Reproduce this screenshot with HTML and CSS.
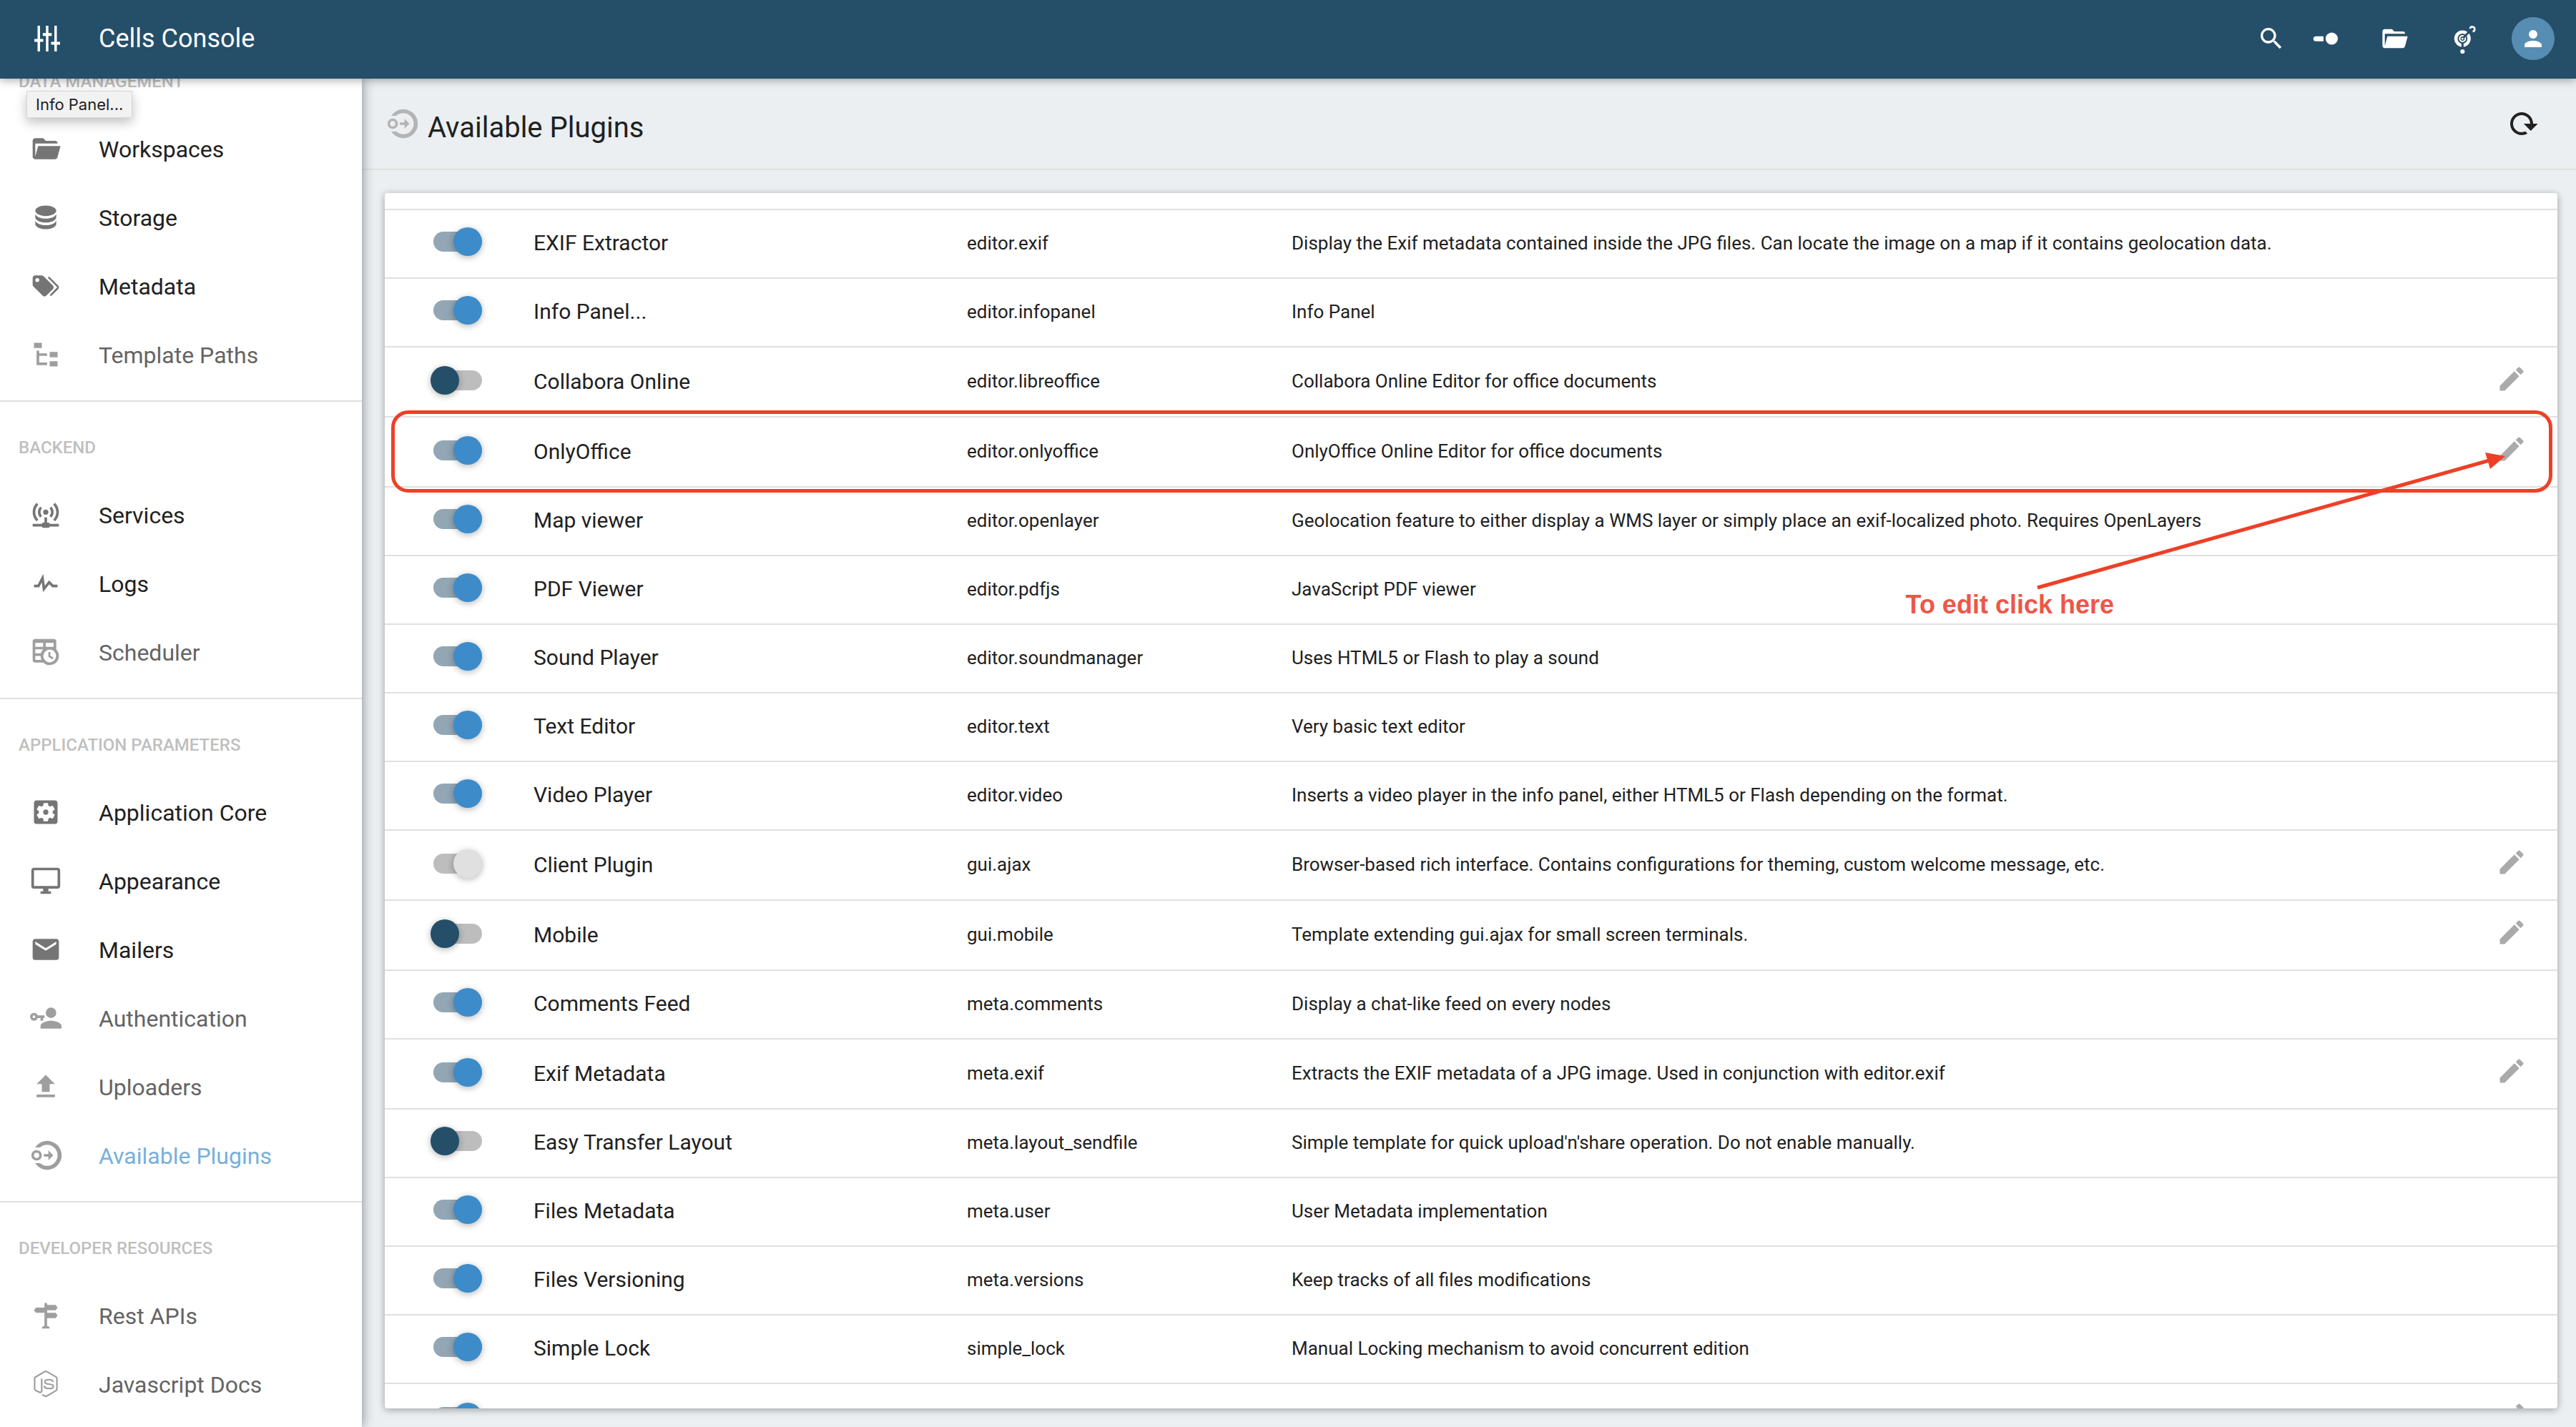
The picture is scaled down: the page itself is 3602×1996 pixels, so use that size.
FILE: index.html
```html
<!DOCTYPE html>
<html lang="en">
<head>
<meta charset="utf-8">
<title>Cells Console</title>
<link rel="stylesheet" href="styles.css">
</head>
<body>
<svg class="sprite" aria-hidden="true">
  <symbol id="i-sliders" viewBox="0 0 40 40"><path d="M8.5 2h3.5v36h-3.500zM20.200 2h3.500v36h-3.500zM32 2h3.500v36H32zM4 20.500h12.500v4H4zM15.800 12.300h12.500v4h-12.500zM27.500 24.500H40v4H27.500z"/></symbol>
  <symbol id="i-folder" viewBox="0 0 24 24"><path d="M19,20H4C2.89,20 2,19.1 2,18V6C2,4.89 2.89,4 4,4H10L12,6H19A2,2 0 0,1 21,8H21L4,8V18L6.14,10H23.21L20.93,18.5C20.7,19.37 19.92,20 19,20Z"/></symbol>
  <symbol id="i-database" viewBox="0 0 24 24"><path d="M12,3C7.58,3 4,4.79 4,7C4,9.21 7.58,11 12,11C16.42,11 20,9.21 20,7C20,4.79 16.42,3 12,3M4,9V12C4,14.21 7.58,16 12,16C16.42,16 20,14.21 20,12V9C20,11.21 16.42,13 12,13C7.58,13 4,11.21 4,9M4,14V17C4,19.21 7.58,21 12,21C16.42,21 20,19.21 20,17V14C20,16.21 16.42,18 12,18C7.58,18 4,16.21 4,14Z"/></symbol>
  <symbol id="i-tags" viewBox="0 0 24 24"><path d="M5.5,9A1.5,1.5 0 0,0 7,7.5A1.5,1.5 0 0,0 5.5,6A1.5,1.5 0 0,0 4,7.5A1.5,1.5 0 0,0 5.5,9M17.41,11.58C17.77,11.94 18,12.44 18,13C18,13.55 17.78,14.05 17.41,14.41L12.41,19.41C12.05,19.77 11.55,20 11,20C10.45,20 9.95,19.78 9.58,19.41L2.59,12.42C2.22,12.05 2,11.55 2,11V6C2,4.89 2.89,4 4,4H9C9.55,4 10.05,4.22 10.41,4.58L17.41,11.58M13.54,5.71L14.54,4.71L21.41,11.58C21.78,11.94 22,12.45 22,13C22,13.55 21.78,14.05 21.42,14.41L16.04,19.79L15.04,18.79L20.75,13L13.54,5.71Z"/></symbol>
  <symbol id="i-tree" viewBox="0 0 24 24"><path d="M3,3H9V7H3V3M15,10H21V14H15V10M15,17H21V21H15V17M13,13H7V18H13V20H7L5,20V9H7V11H13V13Z"/></symbol>
  <symbol id="i-network" viewBox="0 0 24 24"><path d="M4.93,2.93C3.12,4.74 2,7.24 2,10C2,12.76 3.12,15.26 4.93,17.07L6.34,15.66C4.89,14.22 4,12.22 4,10C4,7.79 4.89,5.78 6.34,4.34L4.93,2.93M19.07,2.93L17.66,4.34C19.11,5.78 20,7.79 20,10C20,12.22 19.11,14.22 17.66,15.66L19.07,17.07C20.88,15.26 22,12.76 22,10C22,7.24 20.88,4.74 19.07,2.93M7.76,5.76C6.67,6.85 6,8.35 6,10C6,11.65 6.67,13.15 7.76,14.24L9.17,12.83C8.45,12.11 8,11.11 8,10C8,8.89 8.45,7.89 9.17,7.17L7.76,5.76M16.24,5.76L14.83,7.17C15.55,7.89 16,8.89 16,10C16,11.11 15.55,12.11 14.83,12.83L16.24,14.24C17.33,13.15 18,11.65 18,10C18,8.35 17.33,6.85 16.24,5.76M12,8A2,2 0 0,0 10,10A2,2 0 0,0 12,12A2,2 0 0,0 14,10A2,2 0 0,0 12,8M11,14V18H10A1,1 0 0,0 9,19H2V21H9A1,1 0 0,0 10,22H14A1,1 0 0,0 15,21H22V19H15A1,1 0 0,0 14,18H13V14H11Z"/></symbol>
  <symbol id="i-pulse" viewBox="0 0 24 24"><path d="M3,13H5.79L10.1,4.79L11.28,13.75L14.5,9.66L17.83,13H21V15H17L14.67,12.67L9.92,18.73L8.94,11.31L7,15H3V13Z"/></symbol>
  <symbol id="i-timetable" viewBox="0 0 24 24"><path d="M14,12H15.5V14.82L17.94,16.23L17.19,17.53L14,15.69V12M4,2H18A2,2 0 0,1 20,4V10.1C21.24,11.36 22,13.09 22,15A7,7 0 0,1 15,22C13.09,22 11.36,21.24 10.1,20H4A2,2 0 0,1 2,18V4A2,2 0 0,1 4,2M4,15V18H8.67C8.24,17.09 8,16.07 8,15H4M4,8H10V5H4V8M18,8V5H12V8H18M4,13H8.29C8.63,11.85 9.26,10.82 10.1,10H4V13M15,10.15A4.85,4.85 0 0,0 10.15,15C10.15,17.68 12.32,19.85 15,19.85A4.85,4.85 0 0,0 19.85,15C19.85,12.32 17.68,10.15 15,10.15Z"/></symbol>
  <symbol id="i-settings" viewBox="0 0 24 24"><path d="M17.25,12C17.25,12.23 17.23,12.46 17.2,12.68L18.68,13.84C18.81,13.95 18.85,14.13 18.76,14.29L17.36,16.71C17.27,16.86 17.09,16.92 16.93,16.86L15.19,16.16C14.83,16.44 14.43,16.67 14,16.85L13.75,18.7C13.72,18.87 13.57,19 13.4,19H10.6C10.43,19 10.28,18.87 10.25,18.7L10,16.85C9.56,16.67 9.17,16.44 8.81,16.16L7.07,16.86C6.91,16.92 6.73,16.86 6.64,16.71L5.24,14.29C5.15,14.13 5.19,13.95 5.32,13.84L6.8,12.68C6.77,12.46 6.75,12.23 6.75,12C6.75,11.77 6.77,11.54 6.8,11.32L5.32,10.16C5.19,10.05 5.15,9.86 5.24,9.71L6.64,7.29C6.73,7.13 6.91,7.07 7.07,7.13L8.81,7.84C9.17,7.56 9.56,7.32 10,7.15L10.25,5.29C10.28,5.13 10.43,5 10.6,5H13.4C13.57,5 13.72,5.13 13.75,5.29L14,7.15C14.43,7.32 14.83,7.56 15.19,7.84L16.93,7.13C17.09,7.07 17.27,7.13 17.36,7.29L18.76,9.71C18.85,9.86 18.81,10.05 18.68,10.16L17.2,11.32C17.23,11.54 17.25,11.77 17.25,12M19,3H5C3.89,3 3,3.89 3,5V19A2,2 0 0,0 5,21H19A2,2 0 0,0 21,19V5C21,3.89 20.1,3 19,3M12,10C10.89,10 10,10.89 10,12A2,2 0 0,0 12,14A2,2 0 0,0 14,12A2,2 0 0,0 12,10Z" fill-rule="evenodd"/></symbol>
  <symbol id="i-monitor" viewBox="0 0 24 24"><path d="M21,16H3V4H21M21,2H3C1.89,2 1,2.89 1,4V16A2,2 0 0,0 3,18H10V20H8V22H16V20H14V18H21A2,2 0 0,0 23,16V4C23,2.89 22.1,2 21,2Z"/></symbol>
  <symbol id="i-email" viewBox="0 0 24 24"><path d="M20,8L12,13L4,8V6L12,11L20,6M20,4H4C2.89,4 2,4.89 2,6V18A2,2 0 0,0 4,20H20A2,2 0 0,0 22,18V6C22,4.89 21.1,4 20,4Z"/></symbol>
  <symbol id="i-key" viewBox="0 0 24 24"><path d="M11,10V12H10V14H8V12H5.83C5.42,13.17 4.31,14 3,14A3,3 0 0,1 0,11A3,3 0 0,1 3,8C4.31,8 5.42,8.83 5.83,10H11M3,10A1,1 0 0,0 2,11A1,1 0 0,0 3,12A1,1 0 0,0 4,11A1,1 0 0,0 3,10M16,14C18.67,14 24,15.34 24,18V20H8V18C8,15.34 13.33,14 16,14M16,12A4,4 0 0,1 12,8A4,4 0 0,1 16,4A4,4 0 0,1 20,8A4,4 0 0,1 16,12Z"/></symbol>
  <symbol id="i-upload" viewBox="0 0 24 24"><path d="M9,16V10H5L12,3L19,10H15V16H9M5,20V18H19V20H5Z"/></symbol>
  <symbol id="i-plugins" viewBox="0 0 24 24"><path d="M3.900,6A11,11 0 1 1 3.900,18H7.700A8,8 0 1 0 7.700,6ZM10.500,11H14V8.200L17.700,12L14,15.800V13H10.500ZM5,8A4,4 0 1 0 5,16A4,4 0 1 0 5,8M5,10A2,2 0 1 1 5,14A2,2 0 1 1 5,10Z" fill-rule="evenodd"/></symbol>
  <symbol id="i-signs" viewBox="0 0 24 24"><path d="M11,3L12,2L13,3V4H19.500L21,6L19.500,8H13V10H19.500L21,12L19.500,14H13V20A2,2 0 0,1 15,22H9A2,2 0 0,1 11,20V10H4.500L3,8L4.500,6H11Z"/></symbol>
  <symbol id="i-node" viewBox="0 0 24 24"><path fill="none" stroke="currentColor" stroke-width="1.200" d="M8.900,7.800V17.200Q8.900,18.600 7.300,18.200Q6,17.800 4.200,16.800Q3.500,16.400 3.500,15.600V7.800Q3.500,7.100 4.100,6.700L11.300,2.400Q12,2 12.700,2.400L19.800,6.500Q20.500,6.900 20.500,7.600V15.900Q20.500,16.600 19.800,17L12.700,21.100Q12,21.500 11.300,21.100L9.300,20M17.500,10.400C17.400,9.200 16.500,8.600 14.500,8.600C12.400,8.600 11.300,9.200 11.300,10.300C11.300,11.600 12.500,11.800 14.500,12C16.800,12.200 17.800,12.600 17.800,13.600C17.800,14.900 16.600,15.400 14.500,15.400C12.200,15.400 11,14.900 10.900,13.300"/></symbol>
  <symbol id="i-pencil" viewBox="0 0 24 24"><path d="M20.71,7.04C21.1,6.65 21.1,6 20.71,5.63L18.37,3.29C18,2.9 17.35,2.9 16.96,3.29L15.12,5.12L18.87,8.87M3,17.25V21H6.75L17.81,9.93L14.06,6.18L3,17.25Z"/></symbol>
  <symbol id="i-account" viewBox="0 0 24 24"><path d="M12,4A4,4 0 0,1 16,8A4,4 0 0,1 12,12A4,4 0 0,1 8,8A4,4 0 0,1 12,4M12,14C16.42,14 20,15.79 20,18V20H4V18C4,15.79 7.58,14 12,14Z"/></symbol>
  <symbol id="i-search" viewBox="0 0 24 24"><path d="M9.5,3A6.5,6.5 0 0,1 16,9.5C16,11.11 15.41,12.59 14.44,13.73L14.71,14H15.5L20.5,19L19,20.5L14,15.5V14.71L13.73,14.44C12.59,15.41 11.11,16 9.5,16A6.5,6.5 0 0,1 3,9.5A6.5,6.5 0 0,1 9.5,3M9.5,5C7,5 5,7 5,9.5C5,12 7,14 9.5,14C12,14 14,12 14,9.5C14,7 12,5 9.5,5Z"/></symbol>
  <symbol id="i-switch" viewBox="0 0 40 40"><path d="M6.300 16.700H17v7H6.300a3.500 3.500 0 0 1 0-7z"/><circle cx="28.400" cy="20" r="8.600"/></symbol>
  <symbol id="i-tracker" viewBox="0 0 40 40"><circle cx="19.300" cy="20" r="9.200" fill="none" stroke="currentColor" stroke-width="4.600"/><circle cx="19.300" cy="20" r="5"/><circle cx="19.300" cy="20" r="2.200" fill="none" stroke="#254e69" stroke-width="1.400"/><path d="M20.500 18.800L31 8M19.300 25v9" stroke="#254e69" stroke-width="3" fill="none"/><path d="M29.800 6A3.300 3.300 0 1 1 33.500 10" fill="none" stroke="currentColor" stroke-width="2.600"/><circle cx="19.300" cy="38" r="3.100"/></symbol>
  <symbol id="i-reload" viewBox="0 0 24 24"><path d="M19,12H22.32L17.37,16.95L12.42,12H16.97C17,10.46 16.42,8.93 15.24,7.75C12.9,5.41 9.1,5.41 6.76,7.75C4.42,10.09 4.42,13.9 6.76,16.24C8.6,18.08 11.36,18.47 13.58,17.41L15.05,18.88C12,20.69 8,20.29 5.34,17.65C2.22,14.53 2.23,9.47 5.35,6.35C8.5,3.22 13.53,3.21 16.66,6.34C18.22,7.9 19,9.95 19,12Z"/></symbol>
</svg>

<header class="topbar">
  <svg class="icon icon-m"><use href="#i-sliders"/></svg>
  <span class="brand">Cells Console</span>
  <div class="actions">
    <button class="action action-search" aria-label="Search"><svg class="icon icon-m"><use href="#i-search"/></svg></button>
    <button class="action" aria-label="Toggle simple mode"><svg class="icon icon-m"><use href="#i-switch"/></svg></button>
    <button class="action" aria-label="Workspaces"><svg class="icon icon-m"><use href="#i-folder"/></svg></button>
    <button class="action" aria-label="Help"><svg class="icon icon-m icon-tall"><use href="#i-tracker"/></svg></button>
    <button class="avatar" aria-label="Account"><svg class="icon icon-s"><use href="#i-account"/></svg></button>
  </div>
</header>

<div class="body">
  <aside class="sidebar">
    <nav class="nav">
      <section class="group">
        <h2 class="group-title">DATA MANAGEMENT</h2>
        <a class="item" href="#"><svg class="icon"><use href="#i-folder"/></svg><span class="label">Workspaces</span></a>
        <a class="item" href="#"><svg class="icon"><use href="#i-database"/></svg><span class="label">Storage</span></a>
        <a class="item" href="#"><svg class="icon"><use href="#i-tags"/></svg><span class="label">Metadata</span></a>
        <a class="item dim" href="#"><svg class="icon"><use href="#i-tree"/></svg><span class="label">Template Paths</span></a>
      </section>
      <section class="group">
        <h2 class="group-title">BACKEND</h2>
        <a class="item" href="#"><svg class="icon"><use href="#i-network"/></svg><span class="label">Services</span></a>
        <a class="item" href="#"><svg class="icon"><use href="#i-pulse"/></svg><span class="label">Logs</span></a>
        <a class="item dim" href="#"><svg class="icon"><use href="#i-timetable"/></svg><span class="label">Scheduler</span></a>
      </section>
      <section class="group">
        <h2 class="group-title">APPLICATION PARAMETERS</h2>
        <a class="item" href="#"><svg class="icon"><use href="#i-settings"/></svg><span class="label">Application Core</span></a>
        <a class="item" href="#"><svg class="icon"><use href="#i-monitor"/></svg><span class="label">Appearance</span></a>
        <a class="item" href="#"><svg class="icon"><use href="#i-email"/></svg><span class="label">Mailers</span></a>
        <a class="item dim" href="#"><svg class="icon"><use href="#i-key"/></svg><span class="label">Authentication</span></a>
        <a class="item dim" href="#"><svg class="icon"><use href="#i-upload"/></svg><span class="label">Uploaders</span></a>
        <a class="item dim active" href="#"><svg class="icon"><use href="#i-plugins"/></svg><span class="label">Available Plugins</span></a>
      </section>
      <section class="group">
        <h2 class="group-title">DEVELOPER RESOURCES</h2>
        <a class="item dim" href="#"><svg class="icon"><use href="#i-signs"/></svg><span class="label">Rest APIs</span></a>
        <a class="item dim" href="#"><svg class="icon"><use href="#i-node"/></svg><span class="label">Javascript Docs</span></a>
      </section>
    </nav>
    <div class="tooltip" role="tooltip">Info Panel...</div>
  </aside>

  <main class="main">
    <div class="page-head">
      <svg class="icon page-icon"><use href="#i-plugins"/></svg>
      <h1 class="page-title">Available Plugins</h1>
      <button class="reload" aria-label="Reload"><svg class="icon icon-l"><use href="#i-reload"/></svg></button>
    </div>
    <div class="panel">
      <div class="card">
        <table class="plugins">
          <colgroup><col class="c-toggle"><col class="c-name"><col class="c-id"><col class="c-desc"><col class="c-edit"></colgroup>
          <tbody>
            <tr><td><input class="switch" type="checkbox" role="switch" aria-label="EXIF Extractor" checked></td><td class="name">EXIF Extractor</td><td>editor.exif</td><td>Display the Exif metadata contained inside the JPG files. Can locate the image on a map if it contains geolocation data.</td><td></td></tr>
            <tr><td><input class="switch" type="checkbox" role="switch" aria-label="Info Panel..." checked></td><td class="name">Info Panel...</td><td>editor.infopanel</td><td>Info Panel</td><td></td></tr>
            <tr class="editable"><td><input class="switch" type="checkbox" role="switch" aria-label="Collabora Online"></td><td class="name">Collabora Online</td><td>editor.libreoffice</td><td>Collabora Online Editor for office documents</td><td><button class="edit" aria-label="Edit Collabora Online"><svg class="icon"><use href="#i-pencil"/></svg></button></td></tr>
            <tr class="editable"><td><input class="switch" type="checkbox" role="switch" aria-label="OnlyOffice" checked></td><td class="name">OnlyOffice</td><td>editor.onlyoffice</td><td>OnlyOffice Online Editor for office documents</td><td><button class="edit" aria-label="Edit OnlyOffice"><svg class="icon"><use href="#i-pencil"/></svg></button></td></tr>
            <tr><td><input class="switch" type="checkbox" role="switch" aria-label="Map viewer" checked></td><td class="name">Map viewer</td><td>editor.openlayer</td><td>Geolocation feature to either display a WMS layer or simply place an exif-localized photo. Requires OpenLayers</td><td></td></tr>
            <tr><td><input class="switch" type="checkbox" role="switch" aria-label="PDF Viewer" checked></td><td class="name">PDF Viewer</td><td>editor.pdfjs</td><td>JavaScript PDF viewer</td><td></td></tr>
            <tr><td><input class="switch" type="checkbox" role="switch" aria-label="Sound Player" checked></td><td class="name">Sound Player</td><td>editor.soundmanager</td><td>Uses HTML5 or Flash to play a sound</td><td></td></tr>
            <tr><td><input class="switch" type="checkbox" role="switch" aria-label="Text Editor" checked></td><td class="name">Text Editor</td><td>editor.text</td><td>Very basic text editor</td><td></td></tr>
            <tr><td><input class="switch" type="checkbox" role="switch" aria-label="Video Player" checked></td><td class="name">Video Player</td><td>editor.video</td><td>Inserts a video player in the info panel, either HTML5 or Flash depending on the format.</td><td></td></tr>
            <tr class="editable"><td><input class="switch" type="checkbox" role="switch" aria-label="Client Plugin" checked disabled></td><td class="name">Client Plugin</td><td>gui.ajax</td><td>Browser-based rich interface. Contains configurations for theming, custom welcome message, etc.</td><td><button class="edit" aria-label="Edit Client Plugin"><svg class="icon"><use href="#i-pencil"/></svg></button></td></tr>
            <tr class="editable"><td><input class="switch" type="checkbox" role="switch" aria-label="Mobile"></td><td class="name">Mobile</td><td>gui.mobile</td><td>Template extending gui.ajax for small screen terminals.</td><td><button class="edit" aria-label="Edit Mobile"><svg class="icon"><use href="#i-pencil"/></svg></button></td></tr>
            <tr><td><input class="switch" type="checkbox" role="switch" aria-label="Comments Feed" checked></td><td class="name">Comments Feed</td><td>meta.comments</td><td>Display a chat-like feed on every nodes</td><td></td></tr>
            <tr class="editable"><td><input class="switch" type="checkbox" role="switch" aria-label="Exif Metadata" checked></td><td class="name">Exif Metadata</td><td>meta.exif</td><td>Extracts the EXIF metadata of a JPG image. Used in conjunction with editor.exif</td><td><button class="edit" aria-label="Edit Exif Metadata"><svg class="icon"><use href="#i-pencil"/></svg></button></td></tr>
            <tr><td><input class="switch" type="checkbox" role="switch" aria-label="Easy Transfer Layout"></td><td class="name">Easy Transfer Layout</td><td>meta.layout_sendfile</td><td>Simple template for quick upload'n'share operation. Do not enable manually.</td><td></td></tr>
            <tr><td><input class="switch" type="checkbox" role="switch" aria-label="Files Metadata" checked></td><td class="name">Files Metadata</td><td>meta.user</td><td>User Metadata implementation</td><td></td></tr>
            <tr><td><input class="switch" type="checkbox" role="switch" aria-label="Files Versioning" checked></td><td class="name">Files Versioning</td><td>meta.versions</td><td>Keep tracks of all files modifications</td><td></td></tr>
            <tr><td><input class="switch" type="checkbox" role="switch" aria-label="Simple Lock" checked></td><td class="name">Simple Lock</td><td>simple_lock</td><td>Manual Locking mechanism to avoid concurrent edition</td><td></td></tr>
            <tr class="editable"><td><input class="switch" type="checkbox" role="switch" aria-label="Plugin" checked></td><td class="name"></td><td></td><td></td><td><button class="edit" aria-label="Edit plugin"><svg class="icon"><use href="#i-pencil"/></svg></button></td></tr>
          </tbody>
        </table>
      </div>
      <div class="highlight"></div>
      <svg class="arrow" viewBox="0 0 670 200" aria-hidden="true"><path d="M9 192L648 12" stroke="#ed4026" stroke-width="5" fill="none"/><path d="M635 3L663 8L642 26z" fill="#ed4026"/></svg>
      <p class="note">To edit click here</p>
    </div>
  </main>
</div>
</body>
</html>
```
FILE: styles.css
```css
* { box-sizing: border-box; }

body {
  margin: 0;
  height: 100vh;
  display: flex;
  flex-direction: column;
  overflow: hidden;
  background: #ebeff1;
  color: #212121;
  font-family: Roboto, "Noto Sans", sans-serif;
  font-size: 26px;
}

button {
  padding: 0;
  border: 0;
  background: none;
  color: inherit;
  cursor: pointer;
}

.sprite { display: none; }

.icon {
  display: block;
  flex: none;
  width: 44px;
  height: 44px;
  fill: currentColor;
}
.icon-s { width: 36px; height: 36px; }
.icon-m { width: 40px; height: 40px; }
.icon-l { width: 48px; height: 48px; }
.icon-tall { overflow: visible; }
#i-tracker { overflow: visible; }

/* Top bar */
.topbar {
  flex: none;
  position: relative;
  z-index: 2;
  display: flex;
  align-items: center;
  height: 110px;
  padding: 0 30px 2px 44px;
  background: #254e69;
  color: #fff;
  box-shadow: 0 2px 12px rgba(0, 0, 0, .35);
}
.brand { margin-left: 54px; font-size: 36px; }
.actions {
  display: flex;
  align-items: center;
  margin-left: auto;
}
.action { width: 40px; margin-right: 56px; }
.action-search { margin-right: 36px; }
.action:nth-last-child(2) { margin-right: 48px; }
.avatar {
  display: grid;
  place-items: center;
  width: 60px;
  height: 60px;
  border-radius: 50%;
  background: #588db3;
}

/* Layout */
.body { flex: 1; display: flex; min-height: 0; }

/* Sidebar */
.sidebar {
  flex: none;
  position: relative;
  z-index: 1;
  width: 506px;
  background: #fff;
  box-shadow: 0 0 16px rgba(0, 0, 0, .45);
}
.nav { height: 100%; overflow: hidden; }
.nav::before { content: ""; display: block; margin-top: -60px; }
.group { padding-bottom: 16px; border-bottom: 2px solid #e0e0e0; }
.group:last-child { border-bottom: 0; }
.group-title {
  margin: 0;
  padding: 16px 26px 0;
  height: 110px;
  line-height: 96px;
  font-size: 24px;
  font-weight: 500;
  color: #bfbfbf;
}
.item {
  display: flex;
  align-items: center;
  height: 96px;
  padding-left: 42px;
  color: #757575;
  text-decoration: none;
}
.label { margin-left: 52px; padding-top: 2px; font-size: 32px; color: #212121; }
.dim { color: #9e9e9e; }
.dim .label { color: #646464; }
.active .label { color: #77b0dc; }

.tooltip {
  position: absolute;
  left: 37px;
  top: 17px;
  padding: 0 12px;
  background: #f2f2f2;
  border: 1px solid #d6d6d6;
  box-shadow: 0 6px 16px rgba(0, 0, 0, .25);
  font: 22px/36px Inter, "Noto Sans", sans-serif;
}

/* Page */
.main {
  flex: 1;
  display: flex;
  flex-direction: column;
  min-width: 0;
}
.page-head {
  flex: none;
  display: flex;
  align-items: center;
  height: 128px;
  padding: 0 50px 0 34px;
  border-bottom: 2px solid #e0e0e0;
}
.page-icon { color: #b4b4b4; }
.page-title {
  margin: 0 auto 0 14px;
  padding-top: 10px;
  font-size: 40px;
  font-weight: 400;
}

.panel {
  flex: 1;
  position: relative;
  min-height: 0;
  margin: 32px 26px 26px 32px;
}
.card {
  height: 100%;
  padding-top: 22px;
  overflow: hidden;
  border-radius: 4px;
  background: #fff;
  box-shadow: 0 2px 12px rgba(0, 0, 0, .24), 0 2px 8px rgba(0, 0, 0, .12);
}

/* Plugin table */
.plugins {
  width: 100%;
  table-layout: fixed;
  border-collapse: separate;
  border-spacing: 0;
  border-top: 2px solid #e0e0e0;
}
.c-toggle { width: 160px; }
.c-name { width: 606px; }
.c-id { width: 454px; }
.c-edit { width: 128px; }
.plugins td {
  height: 96px;
  padding: 0 48px 3px;
  border-bottom: 2px solid #e0e0e0;
  white-space: nowrap;
  vertical-align: middle;
}
.plugins .editable td { height: 98px; padding-bottom: 2px; }
.plugins td:first-child { padding: 0 0 6px 64px; }
.plugins .editable td:first-child { padding-bottom: 4px; }
.plugins td:last-child { padding: 0 42px; }
.plugins .name { font-size: 30px; }

.switch {
  appearance: none;
  display: block;
  position: relative;
  width: 72px;
  height: 40px;
  margin: 0;
}
.switch::before {
  content: "";
  position: absolute;
  left: 4px;
  top: 6px;
  width: 68px;
  height: 28px;
  border-radius: 14px;
  background: #bdbdbd;
}
.switch::after {
  content: "";
  position: absolute;
  left: 0;
  top: 0;
  width: 40px;
  height: 40px;
  border-radius: 50%;
  background: #254e69;
  box-shadow: 0 2px 12px rgba(0, 0, 0, .12), 0 2px 8px rgba(0, 0, 0, .18);
}
.switch:checked::before { background: #92a6b4; }
.switch:checked::after { left: 32px; background: #3d8cc9; }
.switch:disabled::before { background: #bdbdbd; }
.switch:disabled::after { background: #e0e0e0; }

.edit { display: block; color: #aaa; margin-bottom: 8px; }

/* Annotation over the table */
.highlight {
  position: absolute;
  left: 9px;
  right: 7px;
  top: 304px;
  height: 115px;
  border: 5px solid #ed4026;
  border-radius: 24px;
  pointer-events: none;
}
.arrow {
  position: absolute;
  right: 66px;
  top: 360px;
  width: 670px;
  height: 200px;
  pointer-events: none;
}
.note {
  position: absolute;
  right: 620px;
  top: 556px;
  margin: 0;
  font: bold 36px/40px "Liberation Sans", Arial, sans-serif;
  color: #ee5648;
}
```
